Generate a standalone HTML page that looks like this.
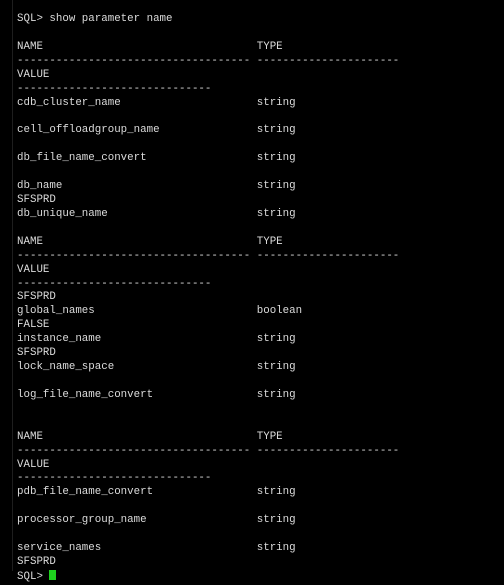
<!DOCTYPE html>
<html><head><style>
html,body{margin:0;padding:0;background:#000;width:504px;height:571px;overflow:hidden}
.b{position:absolute;left:12px;top:0;width:1px;height:571px;background:#1e1e1e}
pre{position:absolute;left:17px;top:13px;margin:0;font-family:"Liberation Mono",monospace;font-size:10.8px;line-height:13.92px;color:#dcdcdc}
.c{display:inline-block;width:7px;height:10px;background:#1ed21e;vertical-align:-1px}
</style></head><body><div class="b"></div><pre>SQL&gt; show parameter name

NAME                                 TYPE
------------------------------------ ----------------------
VALUE
------------------------------
cdb_cluster_name                     string

cell_offloadgroup_name               string

db_file_name_convert                 string

db_name                              string
SFSPRD
db_unique_name                       string

NAME                                 TYPE
------------------------------------ ----------------------
VALUE
------------------------------
SFSPRD
global_names                         boolean
FALSE
instance_name                        string
SFSPRD
lock_name_space                      string

log_file_name_convert                string


NAME                                 TYPE
------------------------------------ ----------------------
VALUE
------------------------------
pdb_file_name_convert                string

processor_group_name                 string

service_names                        string
SFSPRD
SQL&gt; <span class="c"></span></pre></body></html>
